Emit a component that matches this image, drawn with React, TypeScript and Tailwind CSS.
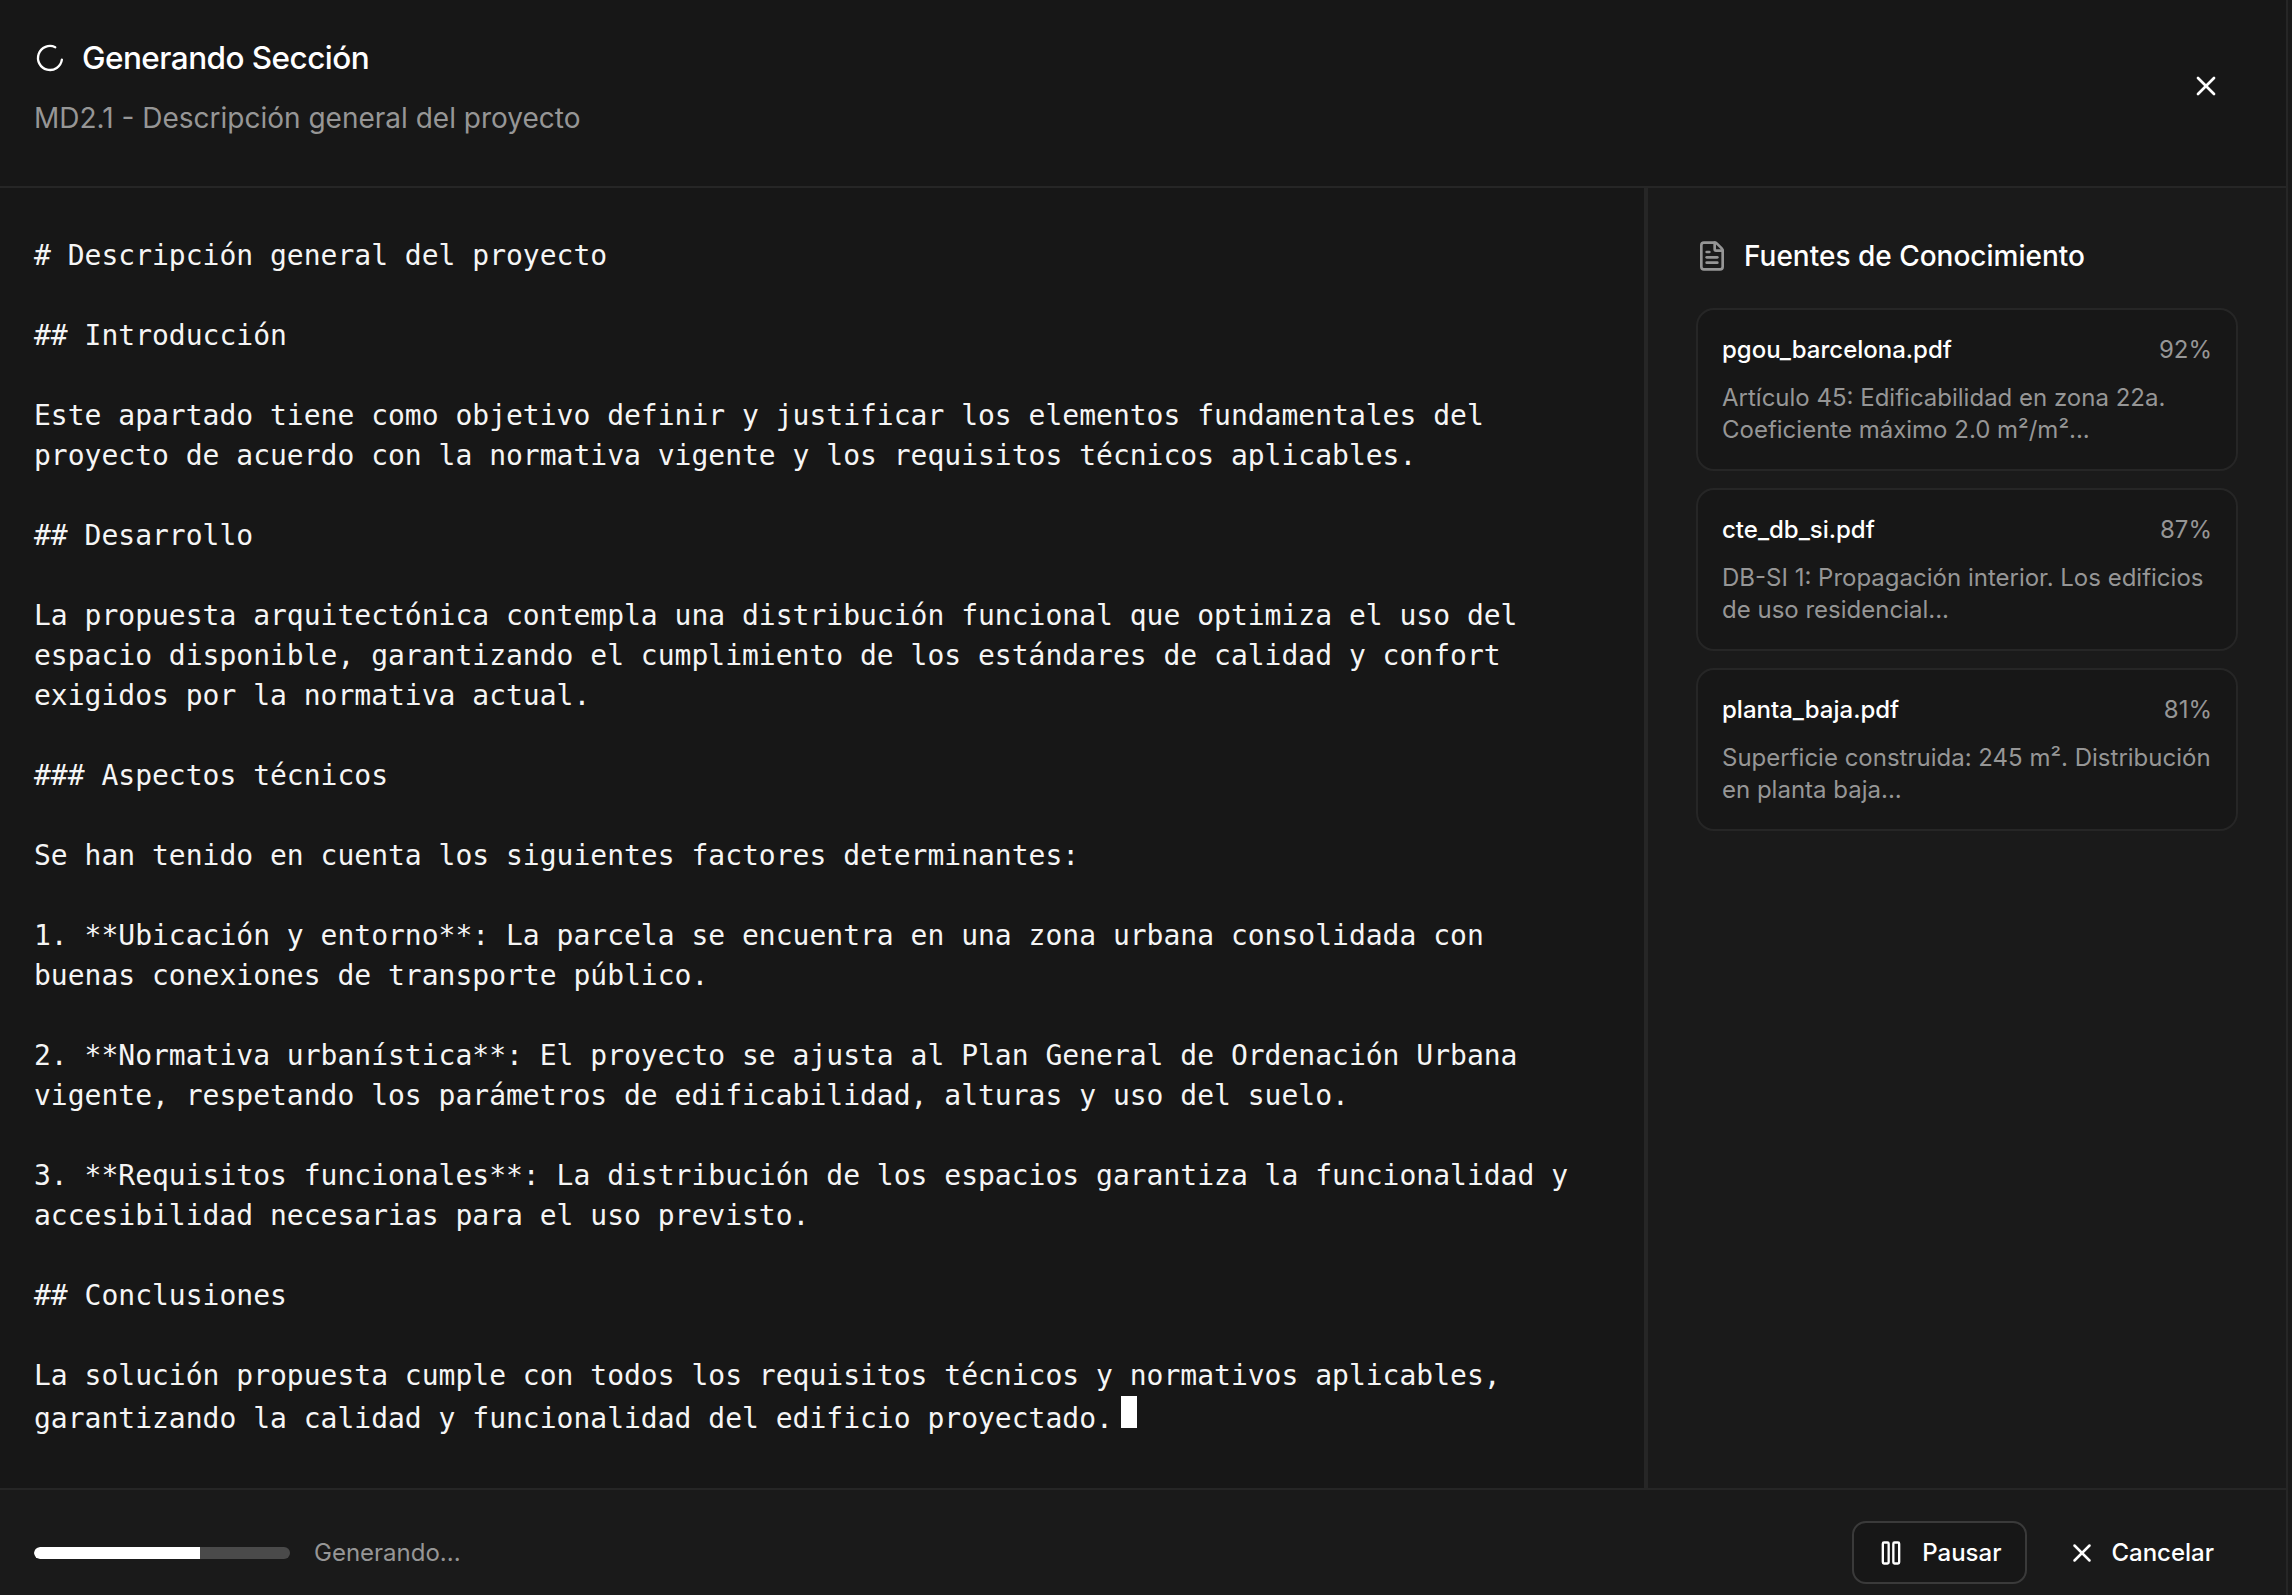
import { FileText, LoaderCircle, Pause, X } from "lucide-react";

const contenido = `# Descripción general del proyecto

## Introducción

Este apartado tiene como objetivo definir y justificar los elementos fundamentales del
proyecto de acuerdo con la normativa vigente y los requisitos técnicos aplicables.

## Desarrollo

La propuesta arquitectónica contempla una distribución funcional que optimiza el uso del
espacio disponible, garantizando el cumplimiento de los estándares de calidad y confort
exigidos por la normativa actual.

### Aspectos técnicos

Se han tenido en cuenta los siguientes factores determinantes:

1. **Ubicación y entorno**: La parcela se encuentra en una zona urbana consolidada con
buenas conexiones de transporte público.

2. **Normativa urbanística**: El proyecto se ajusta al Plan General de Ordenación Urbana
vigente, respetando los parámetros de edificabilidad, alturas y uso del suelo.

3. **Requisitos funcionales**: La distribución de los espacios garantiza la funcionalidad y
accesibilidad necesarias para el uso previsto.

## Conclusiones

La solución propuesta cumple con todos los requisitos técnicos y normativos aplicables,
garantizando la calidad y funcionalidad del edificio proyectado.`;

const fuentes = [
  {
    nombre: "pgou_barcelona.pdf",
    score: "92%",
    texto: "Artículo 45: Edificabilidad en zona 22a. Coeficiente máximo 2.0 m²/m²...",
  },
  {
    nombre: "cte_db_si.pdf",
    score: "87%",
    texto: "DB-SI 1: Propagación interior. Los edificios de uso residencial...",
  },
  {
    nombre: "planta_baja.pdf",
    score: "81%",
    texto: "Superficie construida: 245 m². Distribución en planta baja...",
  },
];

export default function App() {
  return (
    <div className="flex h-screen flex-col overflow-hidden bg-[#1a1a1a] font-['Inter',sans-serif] text-white">
      <div className="mr-[4px] flex h-full min-h-0 flex-col border-r-2 border-[#262626]">
        <header className="flex h-[188px] shrink-0 items-start justify-between border-b-2 border-[#262626] bg-[#171717] pl-[34px] pr-[62px]">
          <div>
            <div className="mt-[40px] flex items-center gap-[16px]">
              <LoaderCircle className="h-[32px] w-[32px] rotate-[8deg] text-white" strokeWidth={1.75} />
              <h1 className="text-[31.5px] font-medium leading-[36px] tracking-[-0.55px]">Generando Sección</h1>
            </div>
            <p className="mt-[25px] text-[28px] leading-[34px] text-[#969696]">
              MD2.1 - Descripción general del proyecto
            </p>
          </div>
          <button className="mr-[2px] mt-[70px] text-white">
            <X className="h-[32px] w-[32px]" strokeWidth={2} />
          </button>
        </header>

        <div className="flex min-h-0 flex-1">
          <main className="min-w-0 flex-1 bg-[#171717] pl-[34px] pt-[48px]">
            <pre className="font-['DejaVu_Sans_Mono',monospace] text-[28px] leading-[40px] text-[#f5f5f5]">
              {contenido}
              <span className="ml-[8px] inline-block h-[32px] w-[16px] bg-white" />
            </pre>
          </main>

          <aside className="w-[642px] shrink-0 border-l-[4px] border-[#262626] pl-[48px] pr-[48px] pt-[50px]">
            <div className="flex items-center gap-[16px]">
              <FileText className="h-[32px] w-[32px] text-[#969696]" strokeWidth={2} />
              <h2 className="text-[28px] font-medium leading-[36px]">Fuentes de Conocimiento</h2>
            </div>
            <div className="mt-[34px] flex flex-col gap-[17px]">
              {fuentes.map((f) => (
                <div key={f.nombre} className="h-[163px] rounded-[18px] border-2 border-[#262626] bg-[#171717] px-[24px] pt-[24px]">
                  <div className="flex items-center justify-between">
                    <span className="text-[24px] font-medium leading-[32px]">{f.nombre}</span>
                    <span className="text-[24px] leading-[32px] text-[#969696]">{f.score}</span>
                  </div>
                  <p className="mt-[16px] text-[24px] leading-[32px] text-[#969696]">{f.texto}</p>
                </div>
              ))}
            </div>
          </aside>
        </div>

        <footer className="flex h-[107px] shrink-0 items-start justify-between border-t-2 border-[#262626] pl-[34px] pr-[44px] pt-[31px]">
          <div className="flex h-[63px] items-center gap-[24px]">
            <div className="h-[12px] w-[256px] overflow-hidden rounded-full bg-[#4a4a4a]">
              <div className="h-full w-[65%] rounded-l-full bg-white" />
            </div>
            <span className="text-[24px] text-[#969696]">Generando...</span>
          </div>
          <div className="flex items-center gap-[12px]">
            <button className="flex h-[63px] items-center gap-[17px] rounded-[14px] border-2 border-[#3a3a3a] bg-[#171717] pl-[23px] pr-[24px] text-[24px] font-medium">
              <Pause className="h-[28px] w-[28px]" strokeWidth={2} />
              Pausar
            </button>
            <button className="flex h-[63px] items-center gap-[14px] px-[28px] text-[24px] font-medium">
              <X className="h-[30px] w-[30px]" strokeWidth={2} />
              Cancelar
            </button>
          </div>
        </footer>
      </div>
    </div>
  );
}
